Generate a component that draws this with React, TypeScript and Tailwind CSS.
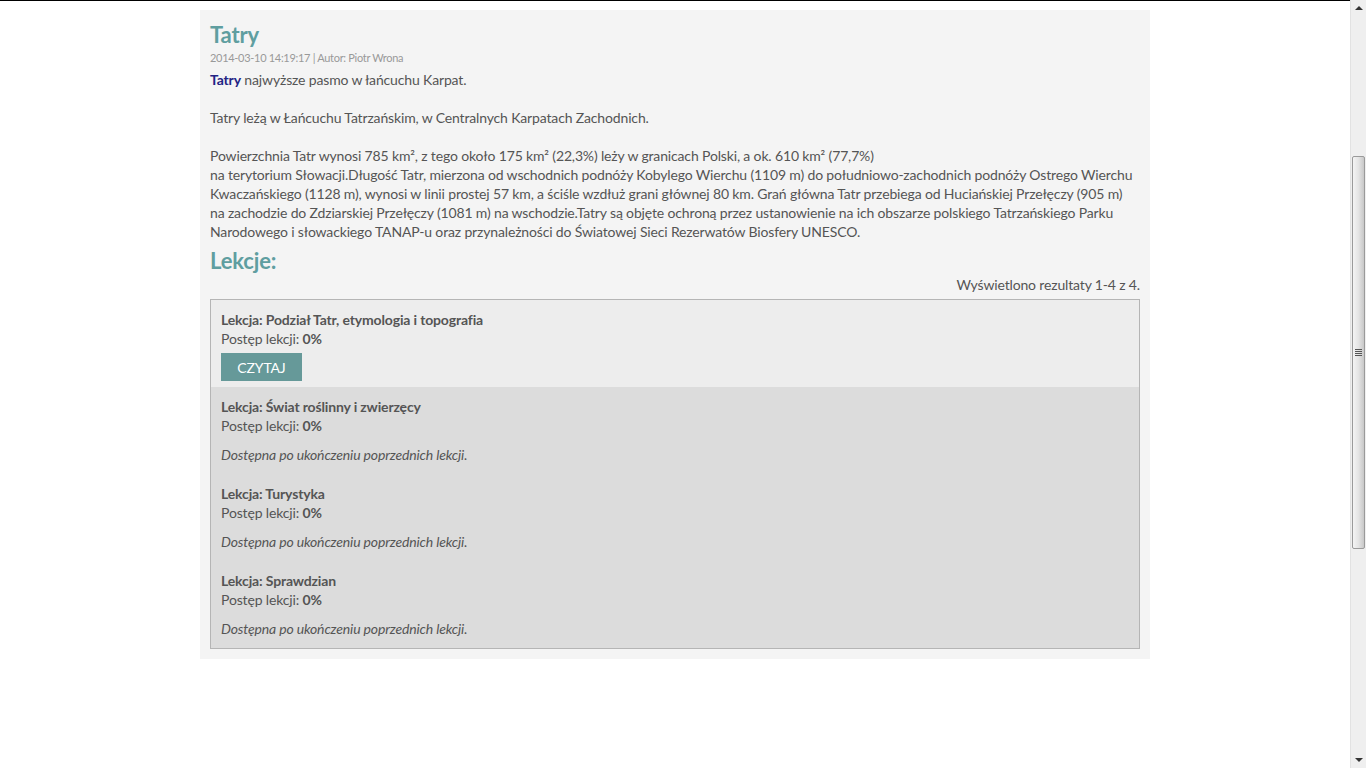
import React from "react";

const lessons = [
  { title: "Podział Tatr, etymologia i topografia", active: true },
  { title: "Świat roślinny i zwierzęcy", active: false },
  { title: "Turystyka", active: false },
  { title: "Sprawdzian", active: false },
];

function Scrollbar() {
  return (
    <div className="w-[16px] h-full flex flex-col bg-[#efefef] border-l border-[#e2e2e2]">
      <div className="h-[16px] flex items-center justify-center">
        <div className="w-0 h-0 border-l-[4px] border-r-[4px] border-b-[4px] border-l-transparent border-r-transparent border-b-[#333]" />
      </div>
      <div className="flex-1 flex flex-col pt-[140px] pb-[203px]">
        <div className="flex-1 mx-[1px] rounded-[2px] border border-[#9a9a9a] bg-gradient-to-r from-[#f4f4f4] via-[#e4e4e4] to-[#c8c8c8] flex items-center justify-center">
          <div className="flex flex-col gap-[1px]">
            <div className="w-[7px] h-[1px] bg-[#555]" />
            <div className="w-[7px] h-[1px] bg-[#555]" />
            <div className="w-[7px] h-[1px] bg-[#555]" />
            <div className="w-[7px] h-[1px] bg-[#555]" />
          </div>
        </div>
      </div>
      <div className="h-[16px] flex items-center justify-center">
        <div className="w-0 h-0 border-l-[4px] border-r-[4px] border-t-[4px] border-l-transparent border-r-transparent border-t-[#333]" />
      </div>
    </div>
  );
}

export default function App() {
  return (
    <div
      className="w-[1366px] h-[768px] flex bg-white overflow-hidden text-[#555]"
      style={{ fontFamily: "Lato, 'Open Sans', sans-serif" }}
    >
      <div className="flex-1 border-t border-black">
        <div className="pt-[9px] flex justify-center">
          <div className="w-[950px] bg-[#f4f4f4] p-[10px] tracking-[-0.15px]">
            <h1 className="text-[22px] leading-[30px] font-bold text-[#5f9ea0]">Tatry</h1>
            <div className="text-[11px] leading-[16px] text-[#999] tracking-[-0.3px]">
              2014-03-10 14:19:17 | Autor: Piotr Wrona
            </div>
            <div className="mt-[4px] text-[14px] leading-[19px]">
              <span className="font-bold text-[#232384]">Tatry</span> najwyższe pasmo w łańcuchu Karpat.
              <br />
              <br />
              Tatry leżą w Łańcuchu Tatrzańskim, w Centralnych Karpatach Zachodnich.
              <br />
              <br />
              Powierzchnia Tatr wynosi 785 km², z tego około 175 km² (22,3%) leży w granicach Polski, a ok. 610 km² (77,7%)
              <br />
              na terytorium Słowacji.Długość Tatr, mierzona od wschodnich podnóży Kobylego Wierchu (1109 m) do południowo-zachodnich podnóży Ostrego Wierchu Kwaczańskiego (1128 m), wynosi w linii prostej 57 km, a ściśle wzdłuż grani głównej 80 km. Grań główna Tatr przebiega od Huciańskiej Przełęczy (905 m) na zachodzie do Zdziarskiej Przełęczy (1081 m) na wschodzie.Tatry są objęte ochroną przez ustanowienie na ich obszarze polskiego Tatrzańskiego Parku Narodowego i słowackiego TANAP-u oraz przynależności do Światowej Sieci Rezerwatów Biosfery UNESCO.
            </div>
            <h2 className="mt-[6px] text-[22px] leading-[28px] font-bold text-[#5f9ea0]">Lekcje:</h2>
            <div className="text-right text-[14px] leading-[19px]">Wyświetlono rezultaty 1-4 z 4.</div>
            <div className="mt-[5px] border border-[#b5b5b5] text-[14px] leading-[19px]">
              {lessons.map((l) =>
                l.active ? (
                  <div key={l.title} className="bg-[#ededed] px-[10px] pt-[10px] pb-[6px]">
                    <div className="font-bold">Lekcja: {l.title}</div>
                    <div>
                      Postęp lekcji: <span className="font-bold">0%</span>
                    </div>
                    <button className="mt-[5px] h-[28px] w-[81px] bg-[#669999] text-white text-[14px] uppercase">
                      Czytaj
                    </button>
                  </div>
                ) : (
                  <div key={l.title} className="bg-[#dcdcdc] p-[10px]">
                    <div className="font-bold">Lekcja: {l.title}</div>
                    <div>
                      Postęp lekcji: <span className="font-bold">0%</span>
                    </div>
                    <div className="mt-[10px] italic">Dostępna po ukończeniu poprzednich lekcji.</div>
                  </div>
                )
              )}
            </div>
          </div>
        </div>
      </div>
      <Scrollbar />
    </div>
  );
}
